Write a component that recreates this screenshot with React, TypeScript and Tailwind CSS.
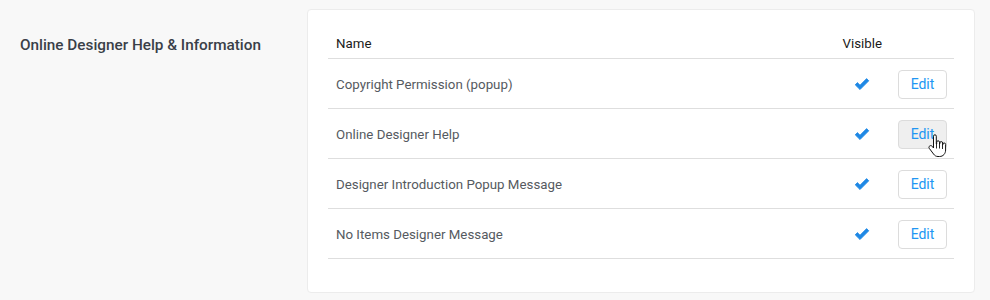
import { Fragment } from "react";

type Item = { name: string; visible: boolean; hover?: boolean };

const items: Item[] = [
  { name: "Copyright Permission (popup)", visible: true },
  { name: "Online Designer Help", visible: true, hover: true },
  { name: "Designer Introduction Popup Message", visible: true },
  { name: "No Items Designer Message", visible: true },
];

function Check() {
  return (
    <svg width="16" height="13" viewBox="0 0 16 13" className="inline-block">
      <path
        d="M1.2 6.8 3.4 4.6 6 7.2 12.6 .6 14.8 2.8 6 11.6z"
        fill="#1e88e5"
        stroke="#1e88e5"
        strokeWidth="0.8"
        strokeLinejoin="round"
      />
    </svg>
  );
}

// pointer cursor drawn over the hovered button
function HandCursor() {
  return (
    <svg
      width="19"
      height="24"
      viewBox="0 0 19 24"
      className="pointer-events-none absolute left-[30px] top-[14px]"
    >
      <path
        d="M5.5 2.2a1.4 1.4 0 0 1 2.8 0V10h.4V8.2a1.4 1.4 0 0 1 2.8 0V10h.3V9a1.4 1.4 0 0 1 2.8 0v2h.2v-.6a1.4 1.4 0 0 1 2.8 0V16c0 3.6-2.4 6.5-6 6.5H10c-2 0-3.3-.9-4.4-2.4L1.3 14.4c-.7-.9-.4-2 .5-2.5.8-.5 1.8-.3 2.4.4L5.5 14z"
        fill="#fff"
        stroke="#111"
        strokeWidth="1"
        strokeLinejoin="round"
      />
      <path d="M8.5 10v4.5M11.5 10v4.5M14.5 11v4" stroke="#111" strokeWidth="0.9" />
    </svg>
  );
}

export default function App() {
  return (
    <div className="min-h-[300px] bg-[#f8f8f8] pt-[9px] font-['Roboto',sans-serif]">
      <div className="flex">
        <div className="w-[307px] shrink-0 pl-5 pt-[25px]">
          <h2 className="text-[15.3px] font-medium text-[#3a3f48]">
            Online Designer Help &amp; Information
          </h2>
        </div>

        <div className="w-[668px] shrink-0 rounded-sm border border-[#ececec] bg-white px-5 pb-[33px] pt-[19px]">
          <div className="grid grid-cols-[1fr_62px_65px] text-[13.3px]">
            <div className="flex h-[30px] items-center border-b border-[#dedede] px-2 text-[#1a1a1a]">
              Name
            </div>
            <div className="flex h-[30px] items-center justify-end border-b border-[#dedede] pr-[7px] text-[#1a1a1a]">
              Visible
            </div>
            <div className="h-[30px] border-b border-[#dedede]" />

            {items.map((it) => (
              <Fragment key={it.name}>
                <div className="flex h-[50px] items-center border-b border-[#dedede] px-2 pt-[2px] text-[#555a60]">
                  {it.name}
                </div>
                <div className="flex h-[50px] items-center justify-end border-b border-[#dedede] pr-[19px] pt-[1px]">
                  {it.visible && <Check />}
                </div>
                <div className="flex h-[50px] items-center justify-end border-b border-[#dedede] pr-[7px] pt-[1px]">
                  <div className="relative">
                    <button
                      className={
                        it.hover
                          ? "h-[29px] w-[49px] rounded-sm border border-[#dcdcdc] bg-[#efefef] text-[14px] text-[#2196f3]"
                          : "h-[29px] w-[49px] rounded-sm border border-[#dcdcdc] bg-white text-[14px] text-[#2196f3]"
                      }
                    >
                      Edit
                    </button>
                    {it.hover && <HandCursor />}
                  </div>
                </div>
              </Fragment>
            ))}
          </div>
        </div>
      </div>
    </div>
  );
}
